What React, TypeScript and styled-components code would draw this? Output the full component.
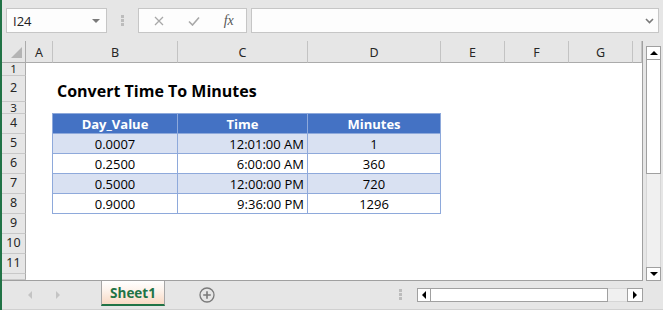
import React from "react";
import styled, { createGlobalStyle } from "styled-components";

const GlobalStyle = createGlobalStyle`
  html, body { margin: 0; padding: 0; overflow: hidden; background: #e6e6e6; }
  * { box-sizing: border-box; }
`;

const UI = `"Noto Sans", "Open Sans", "Liberation Sans", sans-serif`;
const CELL = `"Open Sans", "Liberation Sans", sans-serif`;

const Window = styled.div`
  width: 663px;
  height: 310px;
  display: flex;
  flex-direction: column;
  border-left: 2px solid #217346;
  background: #e6e6e6;
  font-family: ${UI};
`;

const FormulaBar = styled.div`
  height: 41px;
  display: flex;
  align-items: flex-start;
  padding: 8px 4px 0 4px;
`;

const Box = styled.div<{ $w?: number; $grow?: boolean }>`
  height: 25px;
  background: #fdfdfd;
  border: 1px solid #c6c6c6;
  display: flex;
  align-items: center;
  ${(p) => (p.$w ? `width: ${p.$w}px;` : "")}
  ${(p) => (p.$grow ? "flex: 1;" : "")}
`;

const NameText = styled.span`
  font-size: 13px;
  color: #222;
  padding-left: 6px;
  flex: 1;
  font-family: ${CELL};
`;

const Caret = styled.span`
  display: flex;
  padding-right: 6px;
`;

const Grip = styled.div<{ $h: number }>`
  width: 3px;
  height: ${(p) => p.$h}px;
  display: flex;
  flex-direction: column;
  justify-content: space-between;
  & > i {
    display: block;
    width: 3px;
    height: 3px;
    background: #bcbcbc;
  }
`;

const GripWrap = styled.div`
  width: 31px;
  height: 25px;
  display: flex;
  align-items: center;
  justify-content: center;
`;

const FnIcon = styled.span`
  width: 36px;
  display: flex;
  align-items: center;
  justify-content: center;
`;

const FxLabel = styled.span`
  font-family: "Liberation Serif", serif;
  font-style: italic;
  font-size: 14px;
  color: #555;
`;

const Main = styled.div`
  height: 240px;
  display: flex;
`;

const Sheet = styled.div`
  width: 642px;
  height: 240px;
  display: grid;
  grid-template-columns: 24px 27px 125px 130px 133px 64px 64px 64px 1fr;
  grid-template-rows: 22px 13px 26px 12px repeat(8, 20px) 1fr;
  background: #ffffff;
  border-right: 1px solid #a0a0a0;
  border-bottom: 1px solid #a0a0a0;
  overflow: hidden;
`;

const Corner = styled.div`
  background: #e6e6e6;
  border-right: 1px solid #ababab;
  border-bottom: 1px solid #ababab;
  position: relative;
  &::after {
    content: "";
    position: absolute;
    right: 3px;
    bottom: 4px;
    width: 0;
    height: 0;
    border-left: 11px solid transparent;
    border-bottom: 11px solid #b4b4b4;
  }
`;

const ColHead = styled.div`
  background: #e6e6e6;
  border-right: 1px solid #c3c3c3;
  border-bottom: 1px solid #ababab;
  display: flex;
  align-items: center;
  justify-content: center;
  font-size: 12.5px;
  color: #262626;
  padding-top: 1px;
`;

const RowHead = styled.div<{ $row: number; $small?: boolean }>`
  grid-column: 1;
  grid-row: ${(p) => p.$row};
  background: #e6e6e6;
  border-right: 1px solid #ababab;
  border-bottom: 1px solid #c8c8c8;
  display: flex;
  align-items: center;
  justify-content: center;
  font-size: ${(p) => (p.$small ? "11.5px" : "12.5px")};
  color: #262626;
  line-height: 1;
`;

const Title = styled.div`
  grid-column: 3 / 6;
  grid-row: 3;
  font-family: ${CELL};
  font-weight: 700;
  font-size: 16px;
  color: #000;
  display: flex;
  align-items: center;
  padding: 3px 0 0 4px;
`;

const Table = styled.div`
  grid-column: 3 / 6;
  grid-row: 5 / 10;
  display: grid;
  grid-template-columns: 125px 130px 133px;
  grid-template-rows: repeat(5, 20px);
  border-left: 1px solid #8ea9db;
  border-top: 1px solid #8ea9db;
  margin: -1px 0 0 -1px;
  width: 389px;
  height: 101px;
`;

const TCell = styled.div<{ $head?: boolean; $band?: boolean; $align?: "left" | "center" | "right" }>`
  border-right: 1px solid #8ea9db;
  border-bottom: 1px solid #8ea9db;
  background: ${(p) => (p.$head ? "#4472c4" : p.$band ? "#d9e1f2" : "#ffffff")};
  color: ${(p) => (p.$head ? "#ffffff" : "#000000")};
  font-family: ${CELL};
  font-weight: ${(p) => (p.$head ? 700 : 400)};
  font-size: 13px;
  display: flex;
  align-items: center;
  justify-content: ${(p) => (p.$align === "right" ? "flex-end" : p.$align === "left" ? "flex-start" : "center")};
  padding: 1px 3px 0 3px;
  white-space: nowrap;
`;

const VScroll = styled.div`
  width: 20px;
  height: 240px;
  padding: 5px 2px 0 3px;
  display: flex;
  flex-direction: column;
`;

const ScrollBtn = styled.div<{ $w?: number }>`
  width: ${(p) => (p.$w ? `${p.$w}px` : "100%")};
  height: 14px;
  flex-shrink: 0;
  background: #ffffff;
  border: 1px solid #a0a0a0;
  display: flex;
  align-items: center;
  justify-content: center;
`;

const VThumb = styled.div`
  height: 114px;
  background: #ffffff;
  border: 1px solid #a0a0a0;
  border-top: none;
`;

const VTrack = styled.div`
  flex: 1;
  background: #f0f0f0;
  border-left: 1px solid #d6d6d6;
  border-right: 1px solid #d6d6d6;
`;

const TabBar = styled.div`
  flex: 1;
  display: flex;
  align-items: flex-start;
  border-bottom: 1px solid #d0d0d0;
`;

const Nav = styled.div`
  width: 99px;
  height: 27px;
  display: flex;
  align-items: center;
  gap: 24px;
  padding-left: 26px;
`;

const Tab = styled.div`
  width: 64px;
  height: 25px;
  background: linear-gradient(to bottom, #ffffff 0%, #fdf3ec 40%, #f8d9c4 100%);
  border-left: 1px solid #a6a6a6;
  border-right: 1px solid #a6a6a6;
  border-bottom: 2px solid #217346;
  display: flex;
  align-items: center;
  justify-content: center;
  font-family: ${CELL};
  font-weight: 700;
  font-size: 13.5px;
  color: #217346;
  padding-top: 1px;
`;

const AddSheet = styled.div`
  margin-left: 34px;
  height: 27px;
  display: flex;
  align-items: center;
`;

const Spacer = styled.div`
  flex: 1;
`;

const HGripWrap = styled.div`
  height: 27px;
  display: flex;
  align-items: center;
  margin-right: 15px;
`;

const HScroll = styled.div`
  width: 226px;
  height: 14px;
  margin-top: 7px;
  margin-right: 20px;
  display: flex;
`;

const HThumb = styled.div`
  width: 177px;
  height: 14px;
  background: #ffffff;
  border-top: 1px solid #a0a0a0;
  border-bottom: 1px solid #a0a0a0;
  border-right: 1px solid #a0a0a0;
`;

const HTrack = styled.div`
  flex: 1;
  height: 14px;
  background: #f0f0f0;
  border-top: 1px solid #d6d6d6;
  border-bottom: 1px solid #d6d6d6;
`;

const Tri = ({ dir, color = "#000", size = 4 }: { dir: "up" | "down" | "left" | "right"; color?: string; size?: number }) => {
  const s = size;
  const pts =
    dir === "up"
      ? `0,${s} ${s},0 ${2 * s},${s}`
      : dir === "down"
      ? `0,0 ${2 * s},0 ${s},${s}`
      : dir === "left"
      ? `${s},0 ${s},${2 * s} 0,${s}`
      : `0,0 0,${2 * s} ${s},${s}`;
  const w = dir === "up" || dir === "down" ? 2 * s : s;
  const h = dir === "up" || dir === "down" ? s : 2 * s;
  return (
    <svg width={w} height={h} viewBox={`0 0 ${w} ${h}`}>
      <polygon points={pts} fill={color} />
    </svg>
  );
};

const cols = ["A", "B", "C", "D", "E", "F", "G", ""];

const rows = [
  { day: "0.0007", time: "12:01:00 AM", min: "1" },
  { day: "0.2500", time: "6:00:00 AM", min: "360" },
  { day: "0.5000", time: "12:00:00 PM", min: "720" },
  { day: "0.9000", time: "9:36:00 PM", min: "1296" },
];

export default function App() {
  return (
    <>
      <GlobalStyle />
      <Window>
        <FormulaBar>
          <Box $w={101}>
            <NameText>I24</NameText>
            <Caret>
              <Tri dir="down" color="#7a7a7a" size={4} />
            </Caret>
          </Box>
          <GripWrap>
            <Grip $h={11}>
              <i />
              <i />
              <i />
            </Grip>
          </GripWrap>
          <Box $w={109} style={{ paddingLeft: 3 }}>
            <FnIcon>
              <svg width="10" height="10" viewBox="0 0 10 10">
                <path d="M1 1 L9 9 M9 1 L1 9" stroke="#a8a8a8" strokeWidth="1.3" />
              </svg>
            </FnIcon>
            <FnIcon>
              <svg width="12" height="10" viewBox="0 0 12 10">
                <path d="M1 5.5 L4.5 9 L11 1.5" stroke="#a8a8a8" strokeWidth="1.6" fill="none" />
              </svg>
            </FnIcon>
            <FnIcon>
              <FxLabel>fx</FxLabel>
            </FnIcon>
          </Box>
          <Box $grow style={{ marginLeft: 4, justifyContent: "flex-end", paddingRight: 4 }}>
            <svg width="9" height="6" viewBox="0 0 9 6">
              <path d="M1 1 L4.5 4.5 L8 1" stroke="#7a7a7a" strokeWidth="1.6" fill="none" />
            </svg>
          </Box>
        </FormulaBar>
        <Main>
          <Sheet>
            <Corner />
            {cols.map((c, i) => (
              <ColHead key={i}>{c}</ColHead>
            ))}
            {Array.from({ length: 12 }, (_, i) => (
              <RowHead key={i} $row={i + 2} $small={i === 0 || i === 2}>
                {i < 11 ? i + 1 : ""}
              </RowHead>
            ))}
            <Title>Convert Time To Minutes</Title>
            <Table>
              <TCell $head>Day_Value</TCell>
              <TCell $head>Time</TCell>
              <TCell $head>Minutes</TCell>
              {rows.map((r, i) => (
                <React.Fragment key={i}>
                  <TCell $band={i % 2 === 0}>{r.day}</TCell>
                  <TCell $band={i % 2 === 0} $align="right">
                    {r.time}
                  </TCell>
                  <TCell $band={i % 2 === 0}>{r.min}</TCell>
                </React.Fragment>
              ))}
            </Table>
          </Sheet>
          <VScroll>
            <ScrollBtn>
              <Tri dir="up" size={4} />
            </ScrollBtn>
            <VThumb />
            <VTrack />
            <ScrollBtn>
              <Tri dir="down" size={4} />
            </ScrollBtn>
          </VScroll>
        </Main>
        <TabBar>
          <Nav>
            <Tri dir="left" color="#c4c4c4" size={4} />
            <Tri dir="right" color="#c4c4c4" size={4} />
          </Nav>
          <Tab>Sheet1</Tab>
          <AddSheet>
            <svg width="16" height="16" viewBox="0 0 16 16">
              <circle cx="8" cy="8" r="7" fill="none" stroke="#7a7a7a" strokeWidth="1.3" />
              <path d="M8 4.2 V11.8 M4.2 8 H11.8" stroke="#7a7a7a" strokeWidth="1.6" />
            </svg>
          </AddSheet>
          <Spacer />
          <HGripWrap>
            <Grip $h={11}>
              <i />
              <i />
              <i />
            </Grip>
          </HGripWrap>
          <HScroll>
            <ScrollBtn $w={14}>
              <Tri dir="left" size={4} />
            </ScrollBtn>
            <HThumb />
            <HTrack />
            <ScrollBtn $w={16}>
              <Tri dir="right" size={4} />
            </ScrollBtn>
          </HScroll>
        </TabBar>
      </Window>
    </>
  );
}
